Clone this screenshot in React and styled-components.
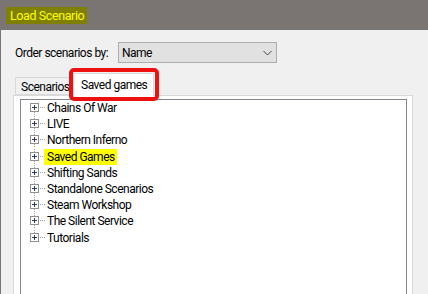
// External Dependencies
import React from 'react';
import styled, { createGlobalStyle } from 'styled-components';

// Local Variables
const GlobalStyle = createGlobalStyle`
  html, body {
    margin: 0;
    padding: 0;
    background: #f0f0f0;
    overflow: hidden;
  }
  * {
    box-sizing: border-box;
  }
`;

const Window = styled.div`
  width: 428px;
  height: 294px;
  border-left: 1px solid #7a7472;
  background: #f0f0f0;
  font-family: Roboto, 'Liberation Sans', sans-serif;
  font-size: 12px;
  letter-spacing: -0.5px;
  color: #000;
  display: flex;
  flex-direction: column;
  overflow: hidden;
`;

const TitleBar = styled.div`
  height: 30px;
  flex: none;
  background: #7a7472;
  display: flex;
  align-items: center;
  padding-left: 5px;
`;

const TitleHighlight = styled.span`
  background: #808000;
  color: #ffff00;
  font-size: 12.5px;
  letter-spacing: -0.4px;
  line-height: 17px;
  padding: 0 3px 0 4px;
`;

const OrderRow = styled.div`
  display: flex;
  align-items: center;
  padding: 12px 0 0 14px;
`;

const Label = styled.span`
  width: 103px;
`;

const Combo = styled.div`
  width: 159px;
  height: 21px;
  background: #e1e1e1;
  border: 1px solid #adadad;
  display: flex;
  align-items: center;
  justify-content: space-between;
  padding: 0 4px 0 3px;
`;

const TabStrip = styled.div`
  position: relative;
  display: flex;
  align-items: flex-end;
  height: 26px;
  margin: 6px 0 0 13px;
  z-index: 1;
`;

const Tab = styled.div`
  width: ${p => (p.active ? '81px' : '58px')};
  height: ${p => (p.active ? '23px' : '18px')};
  margin-bottom: ${p => (p.active ? '-1px' : '0')};
  margin-left: ${p => (p.active ? '0' : '1px')};
  padding: ${p => (p.active ? '4px 0 0 7px' : '2px 0 0 5px')};
  background: ${p => (p.active ? '#fff' : '#f0f0f0')};
  border: 1px solid #d9d9d9;
  border-bottom: ${p => (p.active ? 'none' : '1px solid #d9d9d9')};
  white-space: nowrap;
  overflow: hidden;
`;

const RedMark = styled.div`
  position: absolute;
  left: 55px;
  top: -1px;
  width: 90px;
  height: 33px;
  border: 4px solid #ee1111;
  border-radius: 5px;
  pointer-events: none;
`;

const Panel = styled.div`
  flex: 1;
  margin-left: 12px;
  width: 400px;
  background: #fff;
  border: 1px solid #d9d9d9;
  border-bottom: none;
  padding: 3px 5px 0 6px;
  display: flex;
`;

const TreeBox = styled.div`
  flex: 1;
  border: 1px solid #828790;
  border-bottom: none;
  background: #fff;
  padding: 0 0 0 9px;
`;

const Row = styled.div`
  display: flex;
  align-items: center;
  height: 16.2px;
`;

const ItemText = styled.span`
  padding: 0 2px 0 3px;
  line-height: 16px;
  margin-left: -1px;
  background: ${p => (p.marked ? '#ffff00' : 'transparent')};
`;

const items = [
  'Chains Of War',
  'LIVE',
  'Northern Inferno',
  'Saved Games',
  'Shifting Sands',
  'Standalone Scenarios',
  'Steam Workshop',
  'The Silent Service',
  'Tutorials'
];

// Component Definition
function Expander({ first, last }) {
  return (
    <svg width="15" height="16" viewBox="0 0 15 16">
      {!first && (
        <line x1="4.5" y1="0" x2="4.5" y2="3" stroke="#a0a0a0" strokeDasharray="1 1" />
      )}
      {!last && (
        <line x1="4.5" y1="12" x2="4.5" y2="16" stroke="#a0a0a0" strokeDasharray="1 1" />
      )}
      <line x1="10" y1="7.5" x2="15" y2="7.5" stroke="#a0a0a0" strokeDasharray="1 1" />
      <rect x="0.5" y="3.5" width="8" height="8" fill="#fff" stroke="#919191" />
      <line x1="2" y1="7.5" x2="7" y2="7.5" stroke="#2a3c5a" />
      <line x1="4.5" y1="5" x2="4.5" y2="10" stroke="#2a3c5a" />
    </svg>
  );
}

function Chevron() {
  return (
    <svg width="9" height="6" viewBox="0 0 9 6">
      <path d="M0.5 1 L4.5 5 L8.5 1" fill="none" stroke="#444" strokeWidth="1" />
    </svg>
  );
}

export default function App() {
  return (
    <Window>
      <GlobalStyle />
      <TitleBar>
        <TitleHighlight>Load Scenario</TitleHighlight>
      </TitleBar>
      <OrderRow>
        <Label>Order scenarios by:</Label>
        <Combo>
          <span>Name</span>
          <Chevron />
        </Combo>
      </OrderRow>
      <TabStrip>
        <Tab>Scenarios</Tab>
        <Tab active>Saved games</Tab>
        <RedMark />
      </TabStrip>
      <Panel>
        <TreeBox>
          {items.map((name, i) => (
            <Row key={name}>
              <Expander first={i === 0} last={i === items.length - 1} />
              <ItemText marked={name === 'Saved Games'}>{name}</ItemText>
            </Row>
          ))}
        </TreeBox>
      </Panel>
    </Window>
  );
}
